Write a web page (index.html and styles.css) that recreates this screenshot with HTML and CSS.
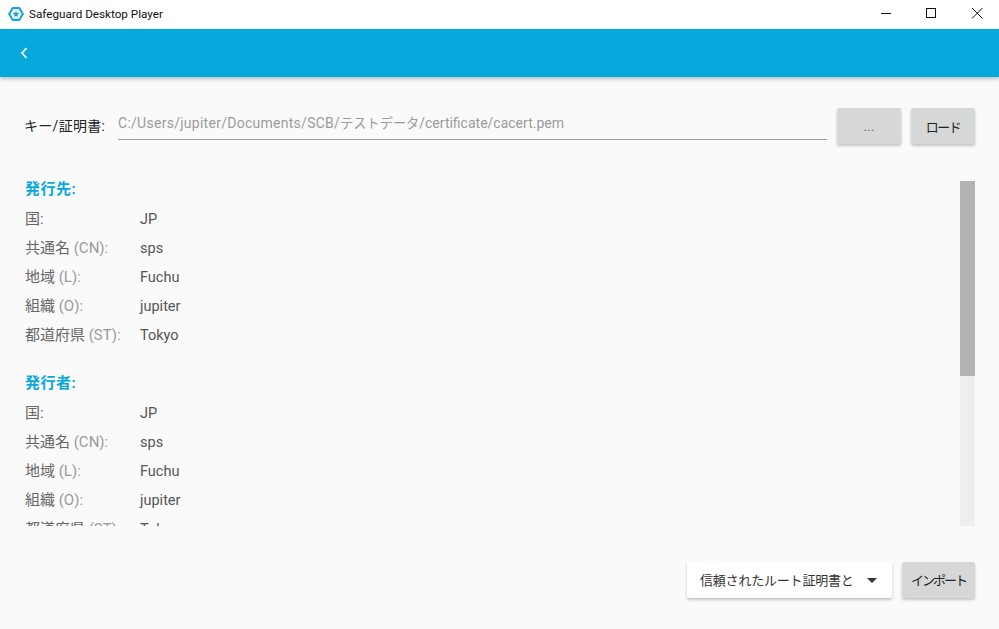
FILE: index.html
```html
<!DOCTYPE html>
<html lang="ja">
<head>
<meta charset="utf-8">
<title>Safeguard Desktop Player</title>
<link rel="stylesheet" href="styles.css">
</head>
<body>
<div class="app">
  <header class="titlebar">
    <div class="title-left">
      <svg class="logo" width="16" height="16" viewBox="0 0 16 16"><path d="M4.600 2.200H11.400L14.800 8 11.400 13.800H4.600L1.200 8Z" fill="#fff" stroke="#1aa7de" stroke-width="2.200" stroke-linejoin="round"/><path d="M8 4.400 9 6.900 11.500 7.100 9.600 8.700 10.200 11.200 8 9.800 5.800 11.200 6.400 8.700 4.500 7.100 7 6.900Z" fill="#1aa7de"/></svg>
      <span class="app-name">Safeguard Desktop Player</span>
    </div>
    <div class="win-controls">
      <svg class="win-btn" width="46" height="29" viewBox="0 0 46 29"><path d="M20 13.500H30" stroke="#111" fill="none"/></svg>
      <svg class="win-btn" width="46" height="29" viewBox="0 0 46 29"><rect x="19.500" y="8.500" width="9" height="9" stroke="#111" fill="none"/></svg>
      <svg class="win-btn" width="46" height="29" viewBox="0 0 46 29"><path d="M19 8 29.500 18.500M29.500 8 19 18.500" stroke="#111" fill="none"/></svg>
    </div>
  </header>
  <div class="toolbar">
    <svg width="10" height="14" viewBox="0 0 10 14"><path d="M7.500 2.200 3 7l4.500 4.800" stroke="#fff" stroke-width="1.700" fill="none"/></svg>
  </div>
  <main class="content">
    <div class="key-row">
      <span class="key-label">キー/証明書:</span>
      <div class="path-field"><span class="path-a">C:/Users/jupiter/Documents/SCB/</span><span class="path-cjk">テストデータ</span>/certificate/cacert.pem</div>
      <button class="btn btn-dots">...</button>
      <button class="btn btn-load">ロード</button>
    </div>
    <div class="details">
      <div class="details-scroll">
        <h3 class="section-head">発行先:</h3>
        <div class="row"><span class="k">国:</span><span class="v">JP</span></div>
        <div class="row"><span class="k">共通名 <i>(CN):</i></span><span class="v">sps</span></div>
        <div class="row"><span class="k">地域 <i>(L):</i></span><span class="v">Fuchu</span></div>
        <div class="row"><span class="k">組織 <i>(O):</i></span><span class="v">jupiter</span></div>
        <div class="row"><span class="k">都道府県 <i>(ST):</i></span><span class="v">Tokyo</span></div>
        <h3 class="section-head second">発行者:</h3>
        <div class="row"><span class="k">国:</span><span class="v">JP</span></div>
        <div class="row"><span class="k">共通名 <i>(CN):</i></span><span class="v">sps</span></div>
        <div class="row"><span class="k">地域 <i>(L):</i></span><span class="v">Fuchu</span></div>
        <div class="row"><span class="k">組織 <i>(O):</i></span><span class="v">jupiter</span></div>
        <div class="row"><span class="k">都道府県 <i>(ST):</i></span><span class="v">Tokyo</span></div>
      </div>
      <div class="scrollbar"><div class="thumb"></div></div>
    </div>
    <div class="actions">
      <div class="select"><span>信頼されたルート証明書と</span><b class="caret"></b></div>
      <button class="btn btn-import">インポート</button>
    </div>
  </main>
</div>
</body>
</html>
```

FILE: styles.css
```css
* { box-sizing: border-box; }
html, body { margin: 0; height: 100%; overflow: hidden; }
body { font-family: Roboto, "Noto Sans CJK JP", sans-serif; background: #fafafa; color: #222; }
.app { display: flex; flex-direction: column; height: 629px; }
.titlebar { height: 29px; background: #fff; display: flex; justify-content: space-between; flex: none; }
.title-left { display: flex; align-items: center; padding-left: 8px; gap: 5px; padding-bottom: 1px; }
.logo { display: block; }
.app-name { font: 11.700px Roboto, "Liberation Sans", sans-serif; color: #111; }
.win-controls { display: flex; }
.win-btn { display: block; }
.toolbar { height: 48px; flex: none; background: #06a9dc; display: flex; align-items: center; padding-left: 19px; box-shadow: 0 2px 4px rgba(0,0,0,.25); position: relative; }
.content { flex: 1; display: flex; flex-direction: column; padding: 31px 24px 0 24px; min-height: 0; }
.key-row { display: flex; align-items: flex-start; height: 36px; }
.key-label { font-size: 14px; color: #222; width: 94px; line-height: 36px; flex: none; white-space: nowrap; letter-spacing: .3px; }
.path-field { width: 709px; height: 32px; flex: none; border-bottom: 1px solid #9e9e9e; font-size: 14px; color: #9a9a9a; line-height: 30px; white-space: nowrap; }
.path-a { letter-spacing: .27px; }
.path-cjk { font-size: 13.200px; }
.btn { border: 0; background: #d6d7d7; border-radius: 2px; font-family: inherit; font-size: 13px; color: #222; box-shadow: 0 2px 3px rgba(0,0,0,.22); height: 36px; padding: 0; white-space: nowrap; }
.btn-dots { width: 64px; margin-left: 10px; color: #7a6a60; font-size: 14px; }
.btn-load { width: 64px; margin-left: 10px; letter-spacing: -1.500px; }
.details { display: flex; height: 361px; margin-top: 21px; }
.details-scroll { flex: none; width: 936px; height: 361px; overflow: hidden; padding: 15px 0 0 1px; font-size: 14.500px; }
.section-head { margin: 0; font-size: 15px; font-weight: 700; color: #06a9dc; line-height: 18px; height: 25px; letter-spacing: .5px; }
.section-head.second { margin-top: 24px; }
.row { display: flex; height: 29px; line-height: 29px; }
.k { width: 115px; flex: none; color: #666; white-space: nowrap; font-size: 15px; }
.k i { font-style: normal; color: #9a9a9a; }
.v { color: #555; }
.scrollbar { width: 15px; height: 345px; margin-top: 16px; background: #eee; }
.thumb { height: 195px; background: #b2b2b2; }
.actions { display: flex; justify-content: flex-end; margin-top: 36px; gap: 10px; }
.select { width: 205px; height: 36px; background: #fff; border-radius: 2px; box-shadow: 0 2px 3px rgba(0,0,0,.22); display: flex; align-items: center; justify-content: space-between; padding: 0 15px 2px 13px; font-size: 13px; color: #333; white-space: nowrap; letter-spacing: -.2px; }
.caret { width: 0; height: 0; border: 5px solid transparent; border-top-color: #333; border-bottom: 0; margin-top: 2px; }
.btn-import { width: 73px; letter-spacing: -2px; padding-bottom: 1px; }
```
